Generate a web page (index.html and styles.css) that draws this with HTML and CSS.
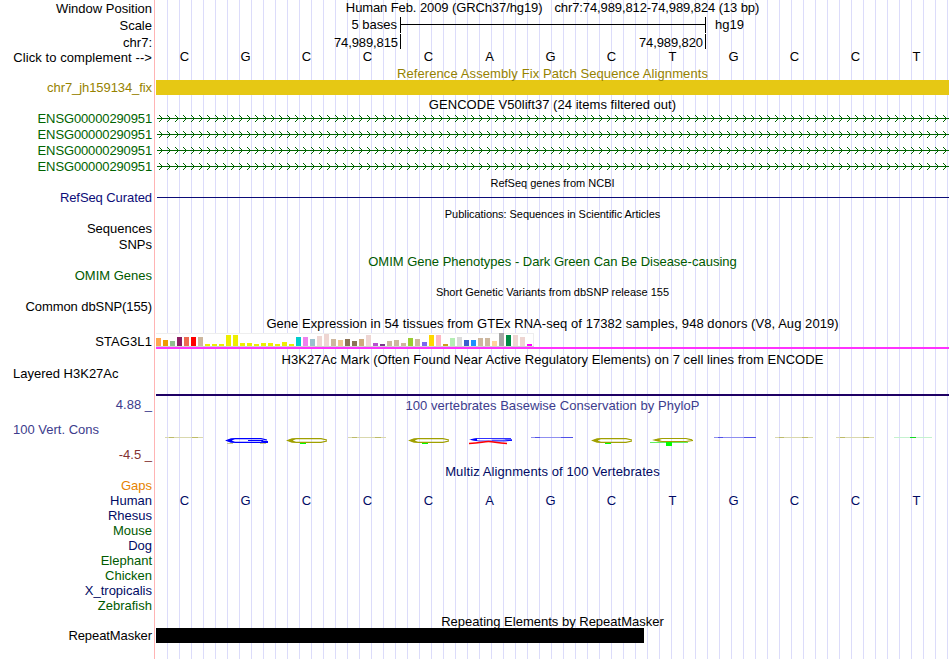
FILE: index.html
```
<!DOCTYPE html>
<html>
<head>
    <meta charset="utf-8">
    <title>Genome Browser</title>
    <link rel="stylesheet" href="styles.css">
</head>
<body>
    <div class="browser">
        <div class="labels">
            <div class="group header">
                <div>Window Position</div>
                <div>Scale</div>
                <div>chr7:</div>
            </div>
            <div class="complement">Click to complement --&gt;</div>
            <div class="group tight gold">chr7_jh159134_fix</div>
            <div class="group genes ensembl green">
                <div>ENSG00000290951</div>
                <div>ENSG00000290951</div>
                <div>ENSG00000290951</div>
                <div>ENSG00000290951</div>
            </div>
            <div class="group tight navy">RefSeq Curated</div>
            <div class="group genes">
                <div>Sequences</div>
                <div>SNPs</div>
            </div>
            <div class="group dark-green">OMIM Genes</div>
            <div class="group tight">Common dbSNP(155)</div>
            <div class="group gtex-label">STAG3L1</div>
            <div class="group left layered">Layered H3K27Ac</div>
            <div class="group cons slate">
                <div>4.88 _</div>
                <div class="left">100 Vert. Cons</div>
                <div class="maroon">-4.5 _</div>
            </div>
            <div class="group species">
                <div class="orange">Gaps</div>
                <div class="blue">Human</div>
                <div class="blue">Rhesus</div>
                <div class="dark-green">Mouse</div>
                <div class="blue">Dog</div>
                <div class="dark-green">Elephant</div>
                <div class="dark-green">Chicken</div>
                <div class="blue">X_tropicalis</div>
                <div class="dark-green">Zebrafish</div>
            </div>
            <div class="group tight repeat-label">RepeatMasker</div>
        </div>

        <div class="tracks">
            <div class="title position"><span>Human Feb. 2009 (GRCh37/hg19)</span><span>chr7:74,989,812-74,989,824 (13 bp)</span></div>
            <div class="scale">
                <span class="scale-text">5 bases</span>
                <span class="ruler"></span>
                <span>hg19</span>
            </div>
            <div class="coords">
                <span class="coord first">74,989,815</span>
                <span class="coord">74,989,820</span>
            </div>
            <div class="bases" data-seq="CGCCCAGCTGCCT"></div>
            <div class="title patch gold">Reference Assembly Fix Patch Sequence Alignments</div>
            <div class="bar patch-bar"></div>
            <div class="title gencode">GENCODE V50lift37 (24 items filtered out)</div>
            <svg class="transcripts" width="793" height="64">
                <defs>
                    <pattern id="arrows" width="8" height="16" patternUnits="userSpaceOnUse">
                        <path d="M3 5L6.5 8.5L3 12" fill="none" stroke="#006400"/>
                    </pattern>
                </defs>
                <rect x="0" width="793" height="64" fill="url(#arrows)"/>
                <path d="M1 8.5H793M1 24.5H793M1 40.5H793M1 56.5H793" stroke="#006400" shape-rendering="crispEdges"/>
            </svg>
            <div class="title small refseq">RefSeq genes from NCBI</div>
            <div class="bar refseq-bar"></div>
            <div class="title small pubs">Publications: Sequences in Scientific Articles</div>
            <div class="title omim dark-green">OMIM Gene Phenotypes - Dark Green Can Be Disease-causing</div>
            <div class="title small dbsnp">Short Genetic Variants from dbSNP release 155</div>
            <div class="title gtex">Gene Expression in 54 tissues from GTEx RNA-seq of 17382 samples, 948 donors (V8, Aug 2019)</div>
            <div class="expression" id="expression"></div>
            <div class="bar gtex-bar"></div>
            <div class="title h3k27">H3K27Ac Mark (Often Found Near Active Regulatory Elements) on 7 cell lines from ENCODE</div>
            <div class="bar h3k27-bar"></div>
            <div class="title phylop slate">100 vertebrates Basewise Conservation by PhyloP</div>
            <svg class="logo" width="793" height="14">
                <defs>
                    <g id="flat-c"><path d="M9 1.5H47" stroke="#d9d8ad"/><path d="M13 1.5H18M36 1.5H42" stroke="#bdbb68"/></g>
                    <g id="flat-g"><path d="M9 1.5H51" stroke="#8f8ff0"/><path d="M13 1.5H18M39 1.5H51" stroke="#5050e8"/></g>
                    <g id="wide-c">
                        <path d="M49 4L43 2.6H18L11 4.5L18 6.4H43L49 5" fill="none" stroke="#a0a000" stroke-width="1.2"/>
                        <path d="M8 4.5L14 2.2H18L15 4.5L18 6.8H14Z" fill="#a0a000"/>
                        <path d="M22 7.5H28" stroke="#00ff00"/>
                    </g>
                </defs>
                <use href="#flat-c" x="0"/>
                <g transform="translate(61)">
                    <path d="M50 4L44 2.6H18L11 4.5L18 6.4H44L50 5.5M31 4.5H46" fill="none" stroke="#0000ff" stroke-width="1.2"/>
                    <path d="M8 4.5L14 2.2H18L15 4.5L18 6.8H14ZM43 4.2L51 5V7H46Z" fill="#0000ff"/>
                    <path d="M10 7.5H16M43 7.5H49" stroke="#c9c98a"/>
                </g>
                <use href="#wide-c" x="122"/>
                <use href="#flat-c" x="183"/>
                <use href="#wide-c" x="244"/>
                <g transform="translate(305)">
                    <path d="M50 2.5H16L10 3.6L18 5H44L51 4.2H31" fill="none" stroke="#3030ff"/>
                    <path d="M8 3.6L16 2.2V5ZM43 3.6H51V4.8H47Z" fill="#0000ff"/>
                    <path d="M8 7.6C20 7 22 5.6 27.5 5.6S35 7 46 7.6" fill="none" stroke="#ff0000" stroke-width="1.5"/>
                </g>
                <use href="#flat-g" x="366"/>
                <use href="#wide-c" x="427"/>
                <g transform="translate(488)">
                    <path d="M48 3.8L42 2.5H18L11 4L18 5.5H42L49 4.4" fill="none" stroke="#a0a000" stroke-width="1.2"/>
                    <path d="M8 4L14 2.5H18L15 4L18 5.5H14Z" fill="#a0a000"/>
                    <path d="M6 6.5H44" stroke="#60f060"/>
                    <path d="M22 6H28V10H22Z" fill="#00ff00"/>
                </g>
                <use href="#flat-g" x="549"/>
                <use href="#flat-c" x="610"/>
                <use href="#flat-c" x="671"/>
                <g transform="translate(732)">
                    <path d="M6 1.5H44" stroke="#c4f2cf"/>
                    <path d="M22 1.5H28" stroke="#10d820"/>
                </g>
            </svg>
            <div class="title multiz blue">Multiz Alignments of 100 Vertebrates</div>
            <div class="bases human blue" data-seq="CGCCCAGCTGCCT"></div>
            <div class="title repeats">Repeating Elements by RepeatMasker</div>
            <div class="bar repeat-bar"></div>
        </div>
    </div>

    <script src="script.js"></script>
</body>
</html>
```
FILE: styles.css
```
body {
    margin: 0;
    background-color: #fff;
    font-family: "Liberation Sans", Arial, sans-serif;
    font-size: 13px;
    line-height: 15px;
    color: #000;
}

.browser {
    display: flex;
    width: 950px;
    height: 659px;
    overflow: hidden;
    white-space: nowrap;
}

/* Label column */
.labels {
    box-sizing: border-box;
    width: 155px;
    padding: 1px 2px 0 0;
    border-right: 1px solid #ffb4b4;
    text-align: right;
}

.group {
    display: flex;
    flex-direction: column;
    margin-top: 16px;
}

.header {
    margin-top: 0;
    gap: 2px;
}

.complement {
    letter-spacing: 0.08px;
}

.complement + .group {
    margin-top: 15px;
}

.tight {
    letter-spacing: -0.08px;
}

.genes {
    gap: 1px;
}

.ensembl {
    letter-spacing: -0.13px;
}

.gtex-label {
    margin-top: 20px;
    letter-spacing: 0.1px;
}

.layered {
    margin-top: 17px;
}

.cons {
    gap: 10px;
}

.repeat-label {
    margin-top: 15px;
}

.left {
    padding-left: 13px;
    text-align: left;
}

/* Text colors */
.gold { color: #968200; }
.green { color: #006400; }
.dark-green { color: #005a00; }
.navy { color: #0c0c78; }
.blue { color: #000a64; }
.slate { color: #3c3c8c; }
.maroon { color: #823232; }
.orange { color: #e68200; }

/* Track column, vertical guide every 12px */
.tracks {
    width: 794px;
    padding-left: 1px;
    background: repeating-linear-gradient(to right, #dcdcfa 0 1px, transparent 1px 12px) 12px 0 / 781px 100% no-repeat;
}

.title {
    height: 15px;
    width: 793px;
    text-align: center;
}

.small {
    font-size: 11px;
}

.bar {
    width: 793px;
}

.position {
    display: flex;
    justify-content: center;
    gap: 12px;
    letter-spacing: -0.1px;
}

.scale {
    display: flex;
    height: 16px;
    margin-top: 2px;
}

.scale-text {
    width: 241px;
    margin-right: 3px;
    text-align: right;
}

.ruler {
    box-sizing: border-box;
    width: 306px;
    height: 16px;
    margin-right: 9px;
    border: solid #000;
    border-width: 0 1px;
    background: linear-gradient(#000, #000) 0 7px / 100% 1px no-repeat;
}

.coords {
    display: flex;
    height: 15px;
    margin-top: 1px;
    letter-spacing: -0.1px;
}

.coord {
    box-sizing: border-box;
    width: 305px;
    padding-right: 2px;
    border-right: 1px solid #000;
    line-height: 17px;
    text-align: right;
}

.first {
    width: 245px;
}

.bases {
    display: flex;
    height: 15px;
    margin-left: -2px;
}

.bases span {
    width: 61px;
    text-align: center;
}

.patch {
    height: 14px;
    margin-top: 2px;
    letter-spacing: 0.1px;
}

.patch-bar {
    height: 15px;
    background-color: #e6c814;
}

.gencode {
    height: 13px;
    margin-top: 2px;
    letter-spacing: 0.04px;
}

.transcripts {
    display: block;
}

.refseq {
    margin-top: 2px;
}

.refseq-bar {
    width: 792px;
    height: 1px;
    margin: 6px 0 0 1px;
    background-color: #0c0c78;
}

.pubs {
    margin-top: 9px;
    letter-spacing: -0.05px;
}

.omim {
    margin-top: 32px;
}

.dbsnp {
    margin-top: 16px;
}

.gtex {
    margin-top: 16px;
    letter-spacing: 0.055px;
}

/* One 5px bar per tissue */
.expression {
    display: flex;
    align-items: flex-end;
    gap: 2px;
    box-sizing: border-box;
    width: 378px;
    height: 14px;
    margin-top: 2px;
    background-color: #fff;
    box-shadow: inset 0 1px #eee, inset -1px 0 #eee;
    border-bottom: 1px solid #d0d0d0;
}

.expression div {
    width: 5px;
}

.gtex-bar {
    height: 2px;
    background-color: #ff32ff;
}

.h3k27 {
    margin-top: 3px;
    letter-spacing: 0.05px;
}

.h3k27-bar {
    height: 2px;
    margin-top: 27px;
    background-color: #1e0064;
}

.phylop {
    margin-top: 2px;
    letter-spacing: 0.04px;
}

.logo {
    display: block;
    margin-top: 23px;
}

.multiz {
    margin-top: 14px;
    letter-spacing: 0.1px;
}

.human {
    margin-top: 14px;
}

.repeats {
    height: 14px;
    margin-top: 106px;
}

.repeat-bar {
    width: 488px;
    height: 15px;
    background-color: #000;
}
```
FILE: script.js
```
// Spell out the bases, one cell each
document.querySelectorAll(".bases").forEach(function (row) {
    row.dataset.seq.split("").forEach(function (base) {
        var cell = document.createElement("span");
        cell.textContent = base;
        row.appendChild(cell);
    });
});

// Median expression per tissue: [color, height]
var tissues = [
    ["#ffa54f", 8], ["#ee9a00", 6], ["#8fbc8f", 5], ["#8b1c62", 9], ["#ee6a50", 9], ["#ff0000", 9],
    ["#cdb79e", 9], ["#eeee00", 2], ["#eeee00", 2], ["#eeee00", 2], ["#eeee00", 11], ["#eeee00", 11],
    ["#eeee00", 3], ["#eeee00", 3], ["#eeee00", 2], ["#eeee00", 3], ["#eeee00", 3], ["#eeee00", 2],
    ["#eeee00", 4], ["#eeee00", 2], ["#00cdcd", 9], ["#ee82ee", 9], ["#9ac0cd", 7], ["#eed5d2", 10],
    ["#eed5d2", 12], ["#cdb79e", 7], ["#eec591", 6], ["#8b7355", 7], ["#8b7355", 5], ["#cdaa7d", 7],
    ["#eed5d2", 11], ["#b452cd", 3], ["#7a378b", 2], ["#cdb79e", 5], ["#cdb79e", 6], ["#cdb79e", 3],
    ["#9acd32", 8], ["#cdb79e", 7], ["#7a67ee", 4], ["#ffd700", 11], ["#ffb6c1", 11], ["#cd9b1d", 2],
    ["#b4eeb4", 8], ["#d9d9d9", 9], ["#3a5fcd", 6], ["#1e90ff", 6], ["#cdb79e", 8], ["#cdb79e", 8],
    ["#ffd39b", 5], ["#a6a6a6", 13], ["#008b45", 11], ["#eed5d2", 11], ["#eed5d2", 9], ["#ff00ff", 2]
];

var expression = document.getElementById("expression");
tissues.forEach(function (t) {
    var bar = document.createElement("div");
    bar.style.backgroundColor = t[0];
    bar.style.height = t[1] + "px";
    expression.appendChild(bar);
});
```
